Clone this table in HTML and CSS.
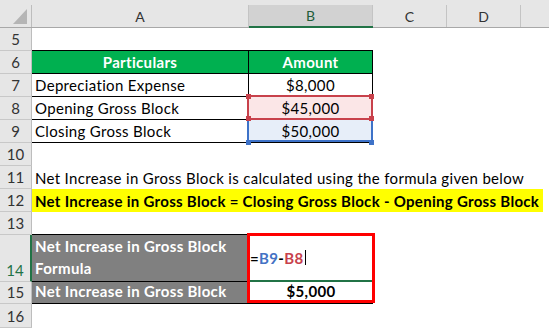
FILE: index.html
```html
<!DOCTYPE html>
<html>
<head>
<meta charset="utf-8">
<title>Net Increase in Gross Block</title>
<link rel="stylesheet" href="styles.css">
</head>
<body>
<div class="sheet">
  <!-- column headers -->
  <div class="corner"><div class="corner-in"><svg class="tri" width="14" height="15" viewBox="0 0 14 15"><path d="M14 0 L14 15 L0 15 Z" fill="#b5b5b5"/></svg></div></div>
  <div class="colhead"><span>A</span></div>
  <div class="colhead sel"><span>B</span></div>
  <div class="colhead"><span>C</span></div>
  <div class="colhead"><span>D</span></div>
  <div class="colhead last"><span></span></div>

  <!-- row 5 -->
  <div class="rowhead">5</div>
  <div class="cell b"></div><div class="cell b"></div><div class="cell"></div><div class="cell"></div><div class="cell"></div>

  <!-- row 6 -->
  <div class="rowhead">6</div>
  <div class="cell b r green center">Particulars</div>
  <div class="cell b r green center">Amount</div>
  <div class="cell"></div><div class="cell"></div><div class="cell"></div>

  <!-- row 7 -->
  <div class="rowhead">7</div>
  <div class="cell b r">Depreciation Expense</div>
  <div class="cell b r center">$8,000</div>
  <div class="cell"></div><div class="cell"></div><div class="cell"></div>

  <!-- row 8 -->
  <div class="rowhead">8</div>
  <div class="cell b r">Opening Gross Block</div>
  <div class="cell b r center pink ref">$45,000
    <span class="ref-box red-box"></span>
    <span class="knob red tl"></span><span class="knob red tr"></span>
    <span class="knob red bl"></span><span class="knob red br"></span>
  </div>
  <div class="cell"></div><div class="cell"></div><div class="cell"></div>

  <!-- row 9 -->
  <div class="rowhead">9</div>
  <div class="cell b r">Closing Gross Block</div>
  <div class="cell b r center blue ref">$50,000
    <span class="ref-box blue-box"></span>
    <span class="knob blue bl2"></span><span class="knob blue br2"></span>
  </div>
  <div class="cell"></div><div class="cell"></div><div class="cell"></div>

  <!-- row 10 -->
  <div class="rowhead">10</div>
  <div class="cell"></div><div class="cell"></div><div class="cell"></div><div class="cell"></div><div class="cell"></div>

  <!-- row 11 -->
  <div class="rowhead">11</div>
  <div class="cell span">Net Increase in Gross Block is calculated using the formula given below</div>

  <!-- row 12 -->
  <div class="rowhead">12</div>
  <div class="cell span flush"><div class="yellow">Net Increase in Gross Block = Closing Gross Block - Opening Gross Block</div></div>

  <!-- row 13 -->
  <div class="rowhead">13</div>
  <div class="cell b"></div><div class="cell"></div><div class="cell"></div><div class="cell"></div><div class="cell"></div>

  <!-- row 14 -->
  <div class="rowhead sel">14</div>
  <div class="cell b gray wrap">Net Increase in Gross Block<br>Formula</div>
  <div class="cell active">
    <span class="f-eq">=</span><span class="f-b9">B9</span><span class="f-eq">-</span><span class="f-b8">B8</span><span class="caret"></span>
    <span class="frame"></span>
  </div>
  <div class="cell"></div><div class="cell"></div><div class="cell"></div>

  <!-- row 15 -->
  <div class="rowhead">15</div>
  <div class="cell b gray short">Net Increase in Gross Block</div>
  <div class="cell b center bold short">$5,000</div>
  <div class="cell"></div><div class="cell"></div><div class="cell"></div>

  <!-- row 16 -->
  <div class="rowhead">16</div>
  <div class="cell"></div><div class="cell"></div><div class="cell"></div><div class="cell"></div><div class="cell"></div>
</div>
</body>
</html>
```

FILE: styles.css
```css
* {
  box-sizing: border-box;
}

html,
body {
  margin: 0;
  padding: 0;
}

body {
  width: 549px;
  height: 328px;
  overflow: hidden;
  background: #ffffff;
  font-family: Lato, "Open Sans", sans-serif;
  font-size: 15px;
  color: #000000;
}

.sheet {
  display: grid;
  grid-template-columns: 32px 217px 124px 74px 74px 1fr;
  grid-template-rows: 28px repeat(9, 23px) 47px 22px 24px;
  height: 328px;
}

/* header strip */
.corner,
.colhead {
  background: #e6e6e6;
  border-bottom: 1px solid #a8a8a8;
  padding-top: 5px;
}

.corner-in {
  height: 100%;
  border-right: 1px solid #bdbdbd;
  padding: 4px 0 0 13px;
}

.tri {
  display: block;
}

.colhead > span {
  display: flex;
  height: 100%;
  align-items: center;
  justify-content: center;
  border-right: 1px solid #c4c4c4;
  font-size: 14px;
  color: #333333;
}

.colhead.last > span {
  border-right: none;
}

.colhead.sel {
  border-bottom: 2px solid #217346;
}

.colhead.sel > span {
  background: #d2d2d2;
  color: #1f5d3a;
}

/* row numbers */
.rowhead {
  background: #e6e6e6;
  border-right: 1px solid #bdbdbd;
  border-bottom: 1px solid #c8c8c8;
  display: flex;
  align-items: flex-end;
  justify-content: center;
  line-height: 22px;
  font-size: 15px;
  color: #333333;
}

.rowhead.sel {
  color: #217346;
  border-right: 2px solid #217346;
}

/* cells */
.cell {
  position: relative;
  min-width: 0;
  white-space: nowrap;
  line-height: 22px;
  letter-spacing: 0.33px;
  padding: 0 3px;
  display: flex;
  align-items: flex-end;
}

.span {
  grid-column: span 5;
}

.flush {
  padding: 0;
}

.b {
  border-bottom: 1px solid #000000;
}

.r {
  border-right: 1px solid #000000;
}

.center {
  justify-content: center;
}

.bold {
  font-weight: 700;
}

.green {
  background: #00b050;
  color: #ffffff;
  font-weight: 700;
}

.gray {
  background: #808080;
  color: #ffffff;
  font-weight: 700;
}

.wrap {
  white-space: normal;
  padding-bottom: 2px;
}

.short {
  line-height: 21px;
  padding-bottom: 1px;
}

.pink {
  background: #fbe6e7;
}

.blue {
  background: #e7eef9;
}

.yellow {
  width: 511px;
  height: 100%;
  background: #ffff00;
  font-weight: 700;
  letter-spacing: 0.3px;
  padding-left: 3px;
  display: flex;
  align-items: flex-end;
}

/* formula reference outlines */
.ref-box {
  position: absolute;
  border: 2px solid;
  pointer-events: none;
}

.red-box {
  top: -2px;
  left: -2px;
  right: -1px;
  bottom: -1px;
  border-color: #c8414b;
  z-index: 3;
}

.blue-box {
  top: -2px;
  left: -2px;
  right: -1px;
  bottom: 0;
  border-color: #3d72c8;
  z-index: 2;
}

.knob {
  position: absolute;
  width: 5px;
  height: 5px;
  z-index: 4;
}

.knob.red {
  background: #c8414b;
}

.knob.blue {
  background: #3d72c8;
}

.tl { top: -3px; left: -3px; }
.tr { top: -3px; right: -2px; }
.bl { bottom: -2px; left: -3px; }
.br { bottom: -2px; right: -2px; }
.bl2 { bottom: -3px; left: -3px; }
.br2 { bottom: -3px; right: -2px; }

/* cell being edited */
.active {
  align-items: center;
  padding: 0 0 0 1px;
  border-bottom: 2px solid #217346;
  font-weight: 700;
}

.f-eq {
  color: #000000;
}

.f-b9 {
  color: #4472c4;
}

.f-b8 {
  color: #c8414b;
}

.caret {
  display: inline-block;
  width: 1px;
  height: 15px;
  margin-left: 2px;
  background: #000000;
}

.frame {
  position: absolute;
  top: -2px;
  left: -2px;
  right: -2px;
  bottom: -23px;
  border: 3px solid #ff0000;
  z-index: 5;
}
```
